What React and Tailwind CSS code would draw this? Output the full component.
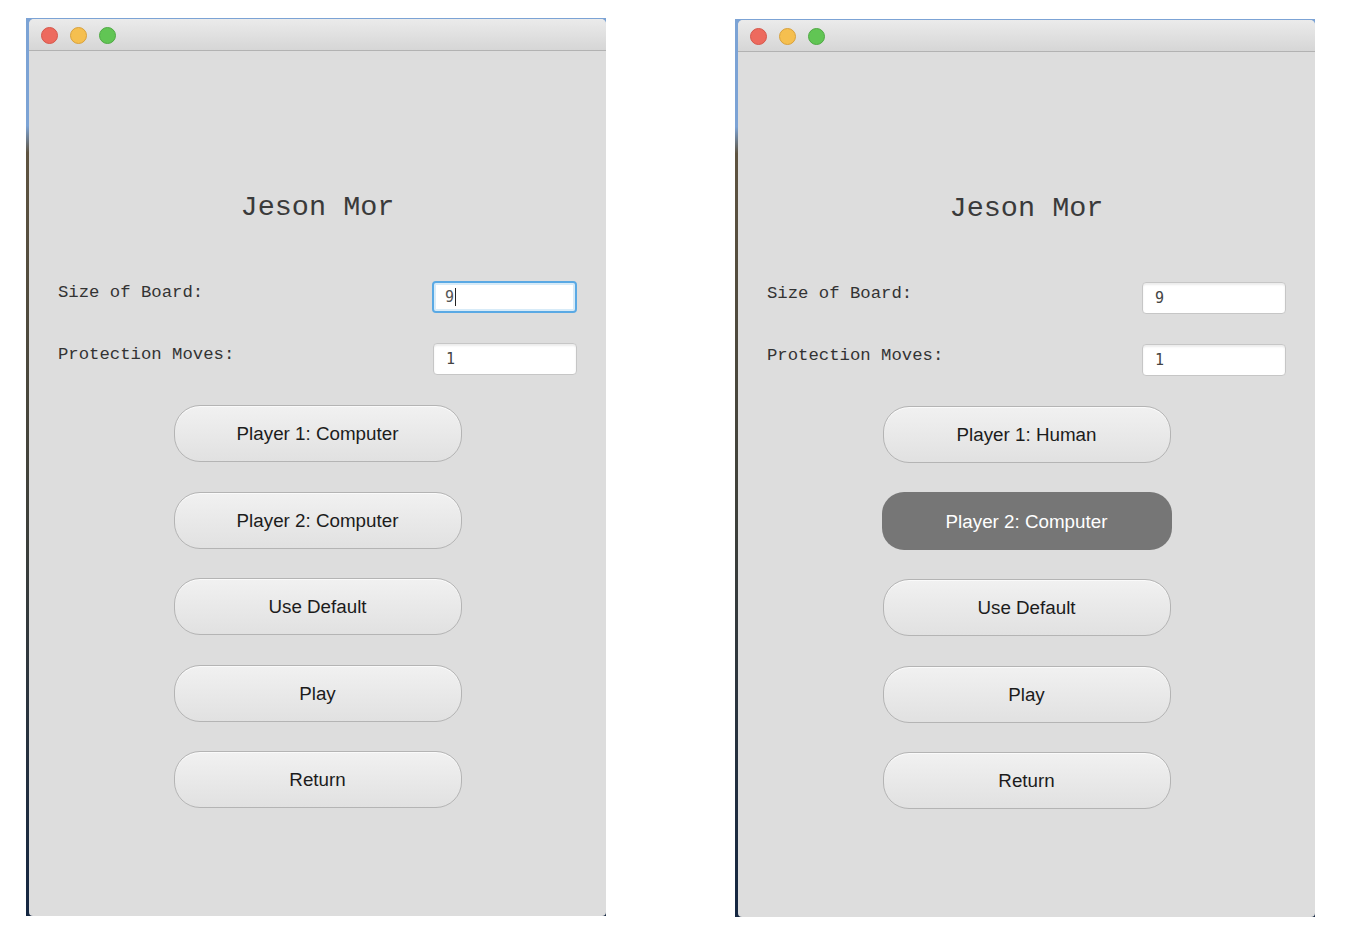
import React from "react";

function Lights() {
  return (
    <div className="flex items-center gap-[12px] pl-[12px] pt-[8px]">
      <div className="w-[17px] h-[17px] rounded-full bg-[#ed6a5e] border border-[#d5574b]" />
      <div className="w-[17px] h-[17px] rounded-full bg-[#f5bf4f] border border-[#d8a13c]" />
      <div className="w-[17px] h-[17px] rounded-full bg-[#61c554] border border-[#4fa944]" />
    </div>
  );
}

function Field({ value, focused }) {
  if (focused) {
    return (
      <div className="w-[145px] h-[32px] rounded-[4px] border-2 border-[#5aa9e4] bg-white shadow-[inset_0_0_0_2px_#d7ebf8] flex items-center pl-[11px]">
        <span className="text-[15px] text-[#555] font-['DejaVu_Sans_Mono',monospace] leading-none">{value}</span>
        <span className="w-[1px] h-[18px] bg-[#222] ml-[1px]" />
      </div>
    );
  }
  return (
    <div className="w-[144px] h-[32px] rounded-[4px] border border-[#c6c6c6] bg-white shadow-[inset_0_2px_2px_rgba(0,0,0,0.08)] flex items-center pl-[12px]">
      <span className="text-[15px] text-[#444] font-['DejaVu_Sans_Mono',monospace] leading-none">{value}</span>
    </div>
  );
}

function Btn({ children, dark }) {
  if (dark) {
    return (
      <div className="w-[290px] h-[58px] -my-[0.5px] pt-[2px] rounded-[22px] bg-[#767676] flex items-center justify-center text-[18.8px] text-white font-['Liberation_Sans',Arial,sans-serif]">
        {children}
      </div>
    );
  }
  return (
    <div className="w-[288px] h-[57px] pt-[2px] rounded-[26px] border border-[#b4b4b4] bg-gradient-to-b from-[#f1f1f1] to-[#e1e1e1] shadow-[inset_0_1px_0_#fafafa] flex items-center justify-center text-[18.8px] text-[#1c1c1c] font-['Liberation_Sans',Arial,sans-serif]">
      {children}
    </div>
  );
}

function Win({ focused, p1, darkP2, extra }) {
  return (
    <div className={"w-[580px] h-[898px] flex bg-[linear-gradient(to_bottom,#7ca3d5_0%,#7ca3d5_12%,#5e5340_15%,#3e403a_55%,#142641_100%)] " + (extra || "")}>
      <div className="ml-[3px] mt-[1px] flex-1 flex flex-col bg-[#dddddd] rounded-t-[5px] rounded-b-[4px] overflow-hidden">
        <div className="h-[32px] shrink-0 bg-gradient-to-b from-[#ebebeb] to-[#d6d6d6] border-b border-[#b2b2b2]">
          <Lights />
        </div>
        <div className="flex flex-col">
          <div className="mt-[141px] h-[32px] flex items-center justify-center text-[28.5px] leading-[32px] text-[#3a3a3a] font-['Liberation_Mono','Courier_New',monospace]">
            Jeson Mor
          </div>
          <div className="mt-[57px] pl-[29px] pr-[29px] flex justify-between items-start h-[32px]">
            <span className="mt-[2px] text-[17.3px] leading-[20px] text-[#333] font-['Liberation_Mono','Courier_New',monospace]">Size of Board:</span>
            <Field value="9" focused={focused} />
          </div>
          <div className="mt-[30px] pl-[29px] pr-[29px] flex justify-between items-start h-[32px]">
            <span className="mt-[2px] text-[17.3px] leading-[20px] text-[#333] font-['Liberation_Mono','Courier_New',monospace]">Protection Moves:</span>
            <Field value="1" />
          </div>
          <div className="mt-[30px] flex flex-col items-center gap-[29.5px]">
            <Btn>{p1}</Btn>
            <Btn dark={darkP2}>Player 2: Computer</Btn>
            <Btn>Use Default</Btn>
            <Btn>Play</Btn>
            <Btn>Return</Btn>
          </div>
        </div>
      </div>
    </div>
  );
}

export default function App() {
  return (
    <div className="w-[1350px] h-[948px] bg-white flex items-start gap-[129px] pl-[26px] pt-[18px]">
      <Win focused p1="Player 1: Computer" />
      <Win p1="Player 1: Human" darkP2 extra="mt-[1px]" />
    </div>
  );
}
